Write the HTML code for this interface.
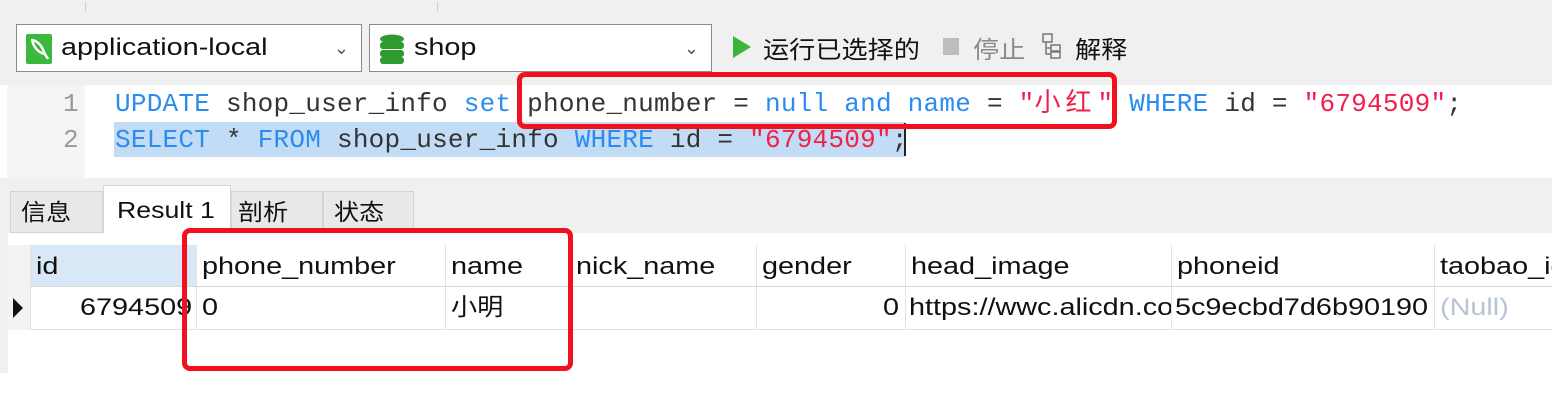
<!DOCTYPE html>
<html><head><meta charset="utf-8"><style>
*{margin:0;padding:0;box-sizing:border-box}
body{width:1560px;height:405px;overflow:hidden;background:#fff;position:relative;font-family:"Liberation Sans","Noto Sans CJK SC",sans-serif;color:#111}
.a{position:absolute}
.sx{display:inline-block;transform:scaleX(1.2);transform-origin:0 50%;white-space:nowrap}
.sc{display:inline-block;transform:scaleX(1.09);transform-origin:0 50%;white-space:nowrap}
.combo{position:absolute;top:24px;height:48px;background:#fff;border:1px solid #8a8a8a;font-size:24px;line-height:46px}
.code{font-family:"Liberation Mono","Noto Sans CJK SC",monospace;font-size:26px;letter-spacing:0.25px;white-space:pre;color:#333}
.k{color:#2a8cf0}.s{color:#f0204a}
.tab{position:absolute;top:191px;height:42px;background:#e8e8e8;border:1px solid #d4d4d4;font-size:23px;line-height:40px;padding-left:10px}
.hd{position:absolute;top:245px;height:42px;border-right:1px solid #e2e2e2;border-bottom:1px solid #d8d8d8;font-size:24px;line-height:44px;padding-left:5px;background:#fff;overflow:hidden}
.cl{position:absolute;top:287px;height:43px;border-right:1px solid #e2e2e2;border-bottom:1px solid #e2e2e2;font-size:24px;line-height:42px;padding-left:5px;white-space:nowrap;overflow:hidden;background:#fff}
.red{position:absolute;border:5px solid #f0101e;border-radius:8px}
</style></head><body>
<div class="a" style="left:0;top:0;width:1552px;height:85px;background:#f0f0f0"></div>
<div class="a" style="left:85px;top:2px;width:1px;height:10px;background:#ccc"></div>
<div class="a" style="left:437px;top:2px;width:1px;height:10px;background:#ccc"></div>
<div class="combo" style="left:16px;width:346px">
 <svg class="a" style="left:9px;top:9px" width="26" height="30"><rect width="26" height="30" rx="2" fill="#3cb83c"/><path d="M5 6c6 0 11 6 13 12 1 3 3 5 4 7M6 6c2 8 6 12 12 14" stroke="#fff" stroke-width="2.5" fill="none"/></svg>
 <span class="a" style="left:44px"><span class="sx">application-local</span></span>
 <span class="a" style="right:12px;color:#555;font-size:18px">&#8964;</span>
</div>
<div class="combo" style="left:369px;width:343px">
 <svg class="a" style="left:9px;top:9px" width="26" height="30"><ellipse cx="13" cy="5" rx="12" ry="4.5" fill="#2f9a2f"/><rect x="1" y="8" width="24" height="7" rx="3" fill="#2f9a2f"/><rect x="1" y="16" width="24" height="7" rx="3" fill="#2f9a2f"/><rect x="1" y="23" width="24" height="7" rx="3" fill="#2f9a2f"/></svg>
 <span class="a" style="left:44px"><span class="sx">shop</span></span>
 <span class="a" style="right:12px;color:#555;font-size:18px">&#8964;</span>
</div>
<svg class="a" style="left:733px;top:36px" width="18" height="22"><path d="M0 0L18 11L0 22Z" fill="#3ab53a"/></svg>
<span class="a" style="left:763px;top:30px;font-size:24px"><span class="sc">运行已选择的</span></span>
<div class="a" style="left:943px;top:38px;width:16px;height:17px;background:#bdbdbd"></div>
<span class="a" style="left:973px;top:30px;font-size:24px;color:#8a8a8a"><span class="sc">停止</span></span>
<svg class="a" style="left:1042px;top:33px" width="20" height="26" fill="none" stroke="#777" stroke-width="1.5"><rect x="1" y="1" width="9" height="8"/><rect x="9" y="12" width="9" height="6"/><rect x="9" y="19" width="9" height="6"/><path d="M4 9v12h5M4 15h5"/></svg>
<span class="a" style="left:1075px;top:30px;font-size:24px"><span class="sc">解释</span></span>

<div class="a" style="left:0;top:85px;width:1552px;height:93px;background:#fff"></div>
<div class="a" style="left:7px;top:85px;width:78px;height:93px;background:#f4f4f4"></div>
<div class="a" style="left:114px;top:122px;width:791px;height:35px;background:#c2dcf5"></div>
<div class="a" style="left:904px;top:123px;width:2px;height:33px;background:#222"></div>
<div class="a code" style="left:63px;top:88px;line-height:32px;color:#999">1</div>
<div class="a code" style="left:63px;top:124px;line-height:32px;color:#999">2</div>
<div class="a code" style="left:115px;top:88px;line-height:32px"><span class="k">UPDATE</span> shop_user_info <span class="k">set</span> phone_number = <span class="k">null</span> <span class="k">and</span> <span class="k">name</span> = <span class="s">"<span style="display:inline-block;width:63px;letter-spacing:5px">小红</span>"</span> <span class="k">WHERE</span> id = <span class="s">"6794509"</span>;</div>
<div class="a code" style="left:115px;top:124px;line-height:32px"><span class="k">SELECT</span> * <span class="k">FROM</span> shop_user_info <span class="k">WHERE</span> id = <span class="s">"6794509"</span>;</div>

<div class="a" style="left:0;top:178px;width:1552px;height:55px;background:#f0f0f0"></div>
<div class="a" style="left:0;top:232px;width:8px;height:141px;background:#f0f0f0"></div>
<div class="a" style="left:1552px;top:0;width:8px;height:405px;background:#fff"></div>
<div class="tab" style="left:10px;width:93px"><span class="sc">信息</span></div>
<div class="tab" style="left:103px;top:185px;height:48px;width:128px;background:#fff;border-bottom:none;line-height:48px;padding-left:13px"><span class="sx" style="transform:scaleX(1.16)">Result 1</span></div>
<div class="tab" style="left:231px;width:92px;padding-left:6px"><span class="sc">剖析</span></div>
<div class="tab" style="left:323px;width:91px"><span class="sc">状态</span></div>

<div class="a" style="left:8px;top:245px;width:23px;height:85px;background:#f3f3f3;border-right:1px solid #e2e2e2"></div>
<svg class="a" style="left:13px;top:298px" width="10" height="20"><path d="M0 0L10 10L0 20Z" fill="#111"/></svg>
<div class="hd" style="left:31px;width:166px;background:#d9e8f6"><span class="sx">id</span></div>
<div class="hd" style="left:197px;width:249px"><span class="sx">phone_number</span></div>
<div class="hd" style="left:446px;width:125px"><span class="sx">name</span></div>
<div class="hd" style="left:571px;width:186px"><span class="sx">nick_name</span></div>
<div class="hd" style="left:757px;width:149px"><span class="sx">gender</span></div>
<div class="hd" style="left:906px;width:266px"><span class="sx">head_image</span></div>
<div class="hd" style="left:1172px;width:263px"><span class="sx">phoneid</span></div>
<div class="hd" style="left:1435px;width:117px;border-right:none;white-space:nowrap"><span class="sx">taobao_id</span></div>
<div class="cl" style="left:31px;width:166px;padding-left:49px"><span class="sx">6794509</span></div>
<div class="cl" style="left:197px;width:249px"><span class="sx">0</span></div>
<div class="cl" style="left:446px;width:125px"><span class="sc">小明</span></div>
<div class="cl" style="left:571px;width:186px"></div>
<div class="cl" style="left:757px;width:149px;padding-left:126px"><span class="sx">0</span></div>
<div class="cl" style="left:906px;width:266px;padding-left:3px"><span class="sx">https://wwc.alicdn.com</span></div>
<div class="cl" style="left:1172px;width:263px;padding-left:3px"><span class="sx">5c9ecbd7d6b90190</span></div>
<div class="cl" style="left:1435px;width:117px;border-right:none;color:#b8c4d4"><span class="sx">(Null)</span></div>

<div class="red" style="left:517px;top:72px;width:600px;height:57px"></div>
<div class="red" style="left:182px;top:228px;width:391px;height:143px"></div>
</body></html>
